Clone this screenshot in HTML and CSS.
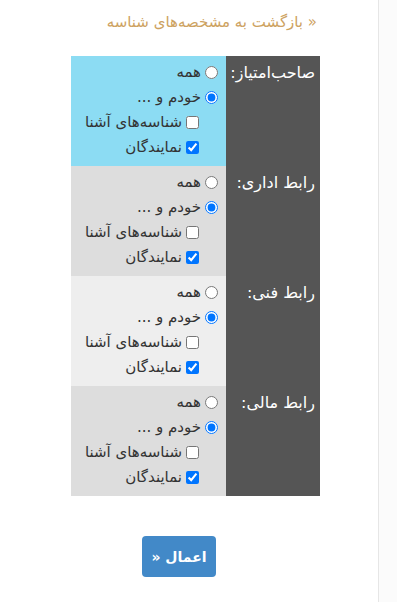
FILE: index.html
```html
<!DOCTYPE html>
<html lang="fa" dir="rtl">
<head>
<meta charset="utf-8">
<title>دسترسی‌ها</title>
<link rel="stylesheet" href="styles.css">
</head>
<body>
<div class="page">
  <main class="main">
    <a class="back" href="#">« بازگشت به مشخصه‌های شناسه</a>
    <table class="perm">
      <tr class="row row-blue">
        <th class="role">صاحب‌امتیاز:</th>
        <td class="opts">
          <label class="opt"><input type="radio" name="r1">همه</label>
          <label class="opt"><input type="radio" name="r1" checked>خودم و ...</label>
          <label class="opt sub"><input type="checkbox">شناسه‌های آشنا</label>
          <label class="opt sub"><input type="checkbox" checked>نمایندگان</label>
        </td>
      </tr>
      <tr class="row row-grey">
        <th class="role">رابط اداری:</th>
        <td class="opts">
          <label class="opt"><input type="radio" name="r2">همه</label>
          <label class="opt"><input type="radio" name="r2" checked>خودم و ...</label>
          <label class="opt sub"><input type="checkbox">شناسه‌های آشنا</label>
          <label class="opt sub"><input type="checkbox" checked>نمایندگان</label>
        </td>
      </tr>
      <tr class="row row-light">
        <th class="role">رابط فنی:</th>
        <td class="opts">
          <label class="opt"><input type="radio" name="r3">همه</label>
          <label class="opt"><input type="radio" name="r3" checked>خودم و ...</label>
          <label class="opt sub"><input type="checkbox">شناسه‌های آشنا</label>
          <label class="opt sub"><input type="checkbox" checked>نمایندگان</label>
        </td>
      </tr>
      <tr class="row row-grey">
        <th class="role">رابط مالی:</th>
        <td class="opts">
          <label class="opt"><input type="radio" name="r4">همه</label>
          <label class="opt"><input type="radio" name="r4" checked>خودم و ...</label>
          <label class="opt sub"><input type="checkbox">شناسه‌های آشنا</label>
          <label class="opt sub"><input type="checkbox" checked>نمایندگان</label>
        </td>
      </tr>
    </table>
    <button class="apply" type="button">اعمال «</button>
  </main>
  <aside class="side"></aside>
</div>
</body>
</html>
```
FILE: styles.css
```css
html, body {
  margin: 0;
  padding: 0;
  background: #ffffff;
}
body {
  font-family: "DejaVu Sans", "Noto Sans", sans-serif;
  font-size: 15px;
}
.page {
  display: flex;
  direction: ltr;
  min-height: 602px;
}
.main {
  direction: rtl;
  width: 379px;
  flex: none;
  border-right: 1px solid #e6e6e6;
  padding: 10px 58px 0 0;
  box-sizing: border-box;
  display: flex;
  flex-direction: column;
  align-items: flex-start;
}
.side {
  flex: 1;
  background: #fbfbfb;
}
.back {
  color: #cda261;
  text-decoration: none;
  font-size: 15px;
  line-height: 24px;
  margin: 0 3px 22px 0;
}
.perm {
  border-collapse: collapse;
  border-spacing: 0;
  width: 249px;
}
.row {
  height: 110px;
}
.role {
  width: 94px;
  background: #555555;
  color: #ffffff;
  font-weight: normal;
  text-align: right;
  vertical-align: top;
  padding: 4px 5px 0 0;
  line-height: 25px;
  font-size: 16px;
  box-sizing: border-box;
}
.opts {
  vertical-align: top;
  padding: 4px 8px 4px 2px;
  color: #333333;
}
.row-blue .opts { background: #8cdcf3; }
.row-grey .opts { background: #dddddd; }
.row-light .opts { background: #eeeeee; }
.opt {
  display: flex;
  align-items: center;
  height: 25px;
  line-height: 25px;
  white-space: nowrap;
}
.opt input {
  margin: 0 0 0 4px;
  width: 13px;
  height: 13px;
  flex: none;
}
.sub {
  padding-right: 19px;
}
.apply {
  margin: 40px 104px 0 0;
  width: 74px;
  height: 41px;
  background: #4289c8;
  color: #ffffff;
  border: none;
  border-radius: 4px;
  font-family: "DejaVu Sans", sans-serif;
  font-size: 14px;
  font-weight: bold;
  padding: 0;
}
```
